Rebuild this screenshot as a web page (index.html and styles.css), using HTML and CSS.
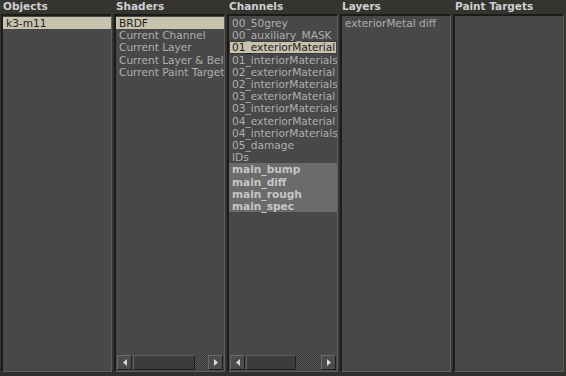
FILE: index.html
```html
<!DOCTYPE html>
<html>
<head>
  <meta charset="UTF-8">
  <title>Outliner</title>
  <link rel="stylesheet" href="styles.css">
</head>
<body>
  <div class="outliner">
    <section class="column">
      <h2 class="column-title">Objects</h2>
      <div class="panel">
        <ul class="list">
          <li class="item is-current">k3-m11</li>
        </ul>
      </div>
    </section>

    <section class="column">
      <h2 class="column-title">Shaders</h2>
      <div class="panel">
        <ul class="list">
          <li class="item is-current">BRDF</li>
          <li class="item">Current Channel</li>
          <li class="item">Current Layer</li>
          <li class="item">Current Layer &amp; Below</li>
          <li class="item">Current Paint Targets</li>
        </ul>
        <div class="hscroll">
          <div class="hscroll-btn">
            <svg width="4" height="7" viewBox="0 0 4 7"><polygon points="4,0 4,7 0,3.5" fill="#d8d8d8"/></svg>
          </div>
          <div class="hscroll-track">
            <div class="hscroll-thumb" style="width: 62px"></div>
          </div>
          <div class="hscroll-btn">
            <svg width="4" height="7" viewBox="0 0 4 7"><polygon points="0,0 0,7 4,3.5" fill="#d8d8d8"/></svg>
          </div>
        </div>
      </div>
    </section>

    <section class="column">
      <h2 class="column-title">Channels</h2>
      <div class="panel">
        <ul class="list">
          <li class="item">00_50grey</li>
          <li class="item">00_auxiliary_MASK</li>
          <li class="item is-current is-focus">01_exteriorMaterial</li>
          <li class="item">01_interiorMaterials</li>
          <li class="item">02_exteriorMaterial</li>
          <li class="item">02_interiorMaterials</li>
          <li class="item">03_exteriorMaterial</li>
          <li class="item">03_interiorMaterials</li>
          <li class="item">04_exteriorMaterial</li>
          <li class="item">04_interiorMaterials</li>
          <li class="item">05_damage</li>
          <li class="item">IDs</li>
          <li class="item is-picked">main_bump</li>
          <li class="item is-picked">main_diff</li>
          <li class="item is-picked">main_rough</li>
          <li class="item is-picked">main_spec</li>
        </ul>
        <div class="hscroll">
          <div class="hscroll-btn">
            <svg width="4" height="7" viewBox="0 0 4 7"><polygon points="4,0 4,7 0,3.5" fill="#d8d8d8"/></svg>
          </div>
          <div class="hscroll-track">
            <div class="hscroll-thumb" style="width: 50px"></div>
          </div>
          <div class="hscroll-btn">
            <svg width="4" height="7" viewBox="0 0 4 7"><polygon points="0,0 0,7 4,3.5" fill="#d8d8d8"/></svg>
          </div>
        </div>
      </div>
    </section>

    <section class="column">
      <h2 class="column-title">Layers</h2>
      <div class="panel">
        <ul class="list">
          <li class="item">exteriorMetal diff</li>
        </ul>
      </div>
    </section>

    <section class="column">
      <h2 class="column-title">Paint Targets</h2>
      <div class="panel">
        <ul class="list"></ul>
      </div>
    </section>
  </div>
  <div class="footer-strip"></div>
</body>
</html>
```

FILE: styles.css
```css
body {
  margin: 0;
  width: 566px;
  height: 376px;
  overflow: hidden;
  background-color: #36342f;
  font-family: "DejaVu Sans", Verdana, sans-serif;
}

.outliner {
  display: grid;
  grid-template-columns: repeat(5, 113px);
  height: 372px;
}

.column {
  display: flex;
  flex-direction: column;
  min-width: 0;
  padding: 0 1px;
}

.column-title {
  margin: 0;
  height: 14px;
  padding: 0 0 0 2px;
  font-size: 10.5px;
  line-height: 12px;
  font-weight: bold;
  color: #cfd0d3;
  white-space: nowrap;
}

.panel {
  flex: 1;
  min-height: 0;
  display: flex;
  flex-direction: column;
  background-color: #484848;
  border-style: solid;
  border-width: 2px 1px 1px 2px;
  border-color: #1b1b1b #5e5e5e #5e5e5e #1b1b1b;
}

.list {
  flex: 1;
  list-style: none;
  margin: 0;
  padding: 1px 0 0;
  overflow: hidden;
}

.item {
  padding-left: 3px;
  font-size: 10.6px;
  line-height: 12.2px;
  color: #afafaf;
  white-space: nowrap;
}

.item.is-current {
  background-color: #c8c3ae;
  color: #1c1c1c;
}

.item.is-focus {
  box-shadow: inset 0 0 0 1px #3a3a36;
}

.item.is-picked {
  background-color: #6b6b6b;
  color: #c6c6c6;
  font-weight: bold;
}

/* horizontal scroll bar */
.hscroll {
  display: flex;
  gap: 1px;
  height: 15px;
  margin: 0 1px 1px;
}

.hscroll-btn {
  flex: none;
  width: 15px;
  box-sizing: border-box;
  display: flex;
  align-items: center;
  justify-content: center;
  background-color: #4c4c4c;
  border: 1px solid;
  border-color: #6a6a6a #1e1e1e #1e1e1e #6a6a6a;
}

.hscroll-track {
  flex: 1;
  display: flex;
  background: repeating-conic-gradient(#3a3a3a 0 25%, #565656 0 50%) 0 0 / 2px 2px;
}

.hscroll-thumb {
  box-sizing: border-box;
  background-color: #3c3c3c;
  border: 1px solid;
  border-color: #5f5f5f #1e1e1e #1e1e1e #5f5f5f;
}

.footer-strip {
  height: 4px;
  background-color: #2f302b;
}
```
